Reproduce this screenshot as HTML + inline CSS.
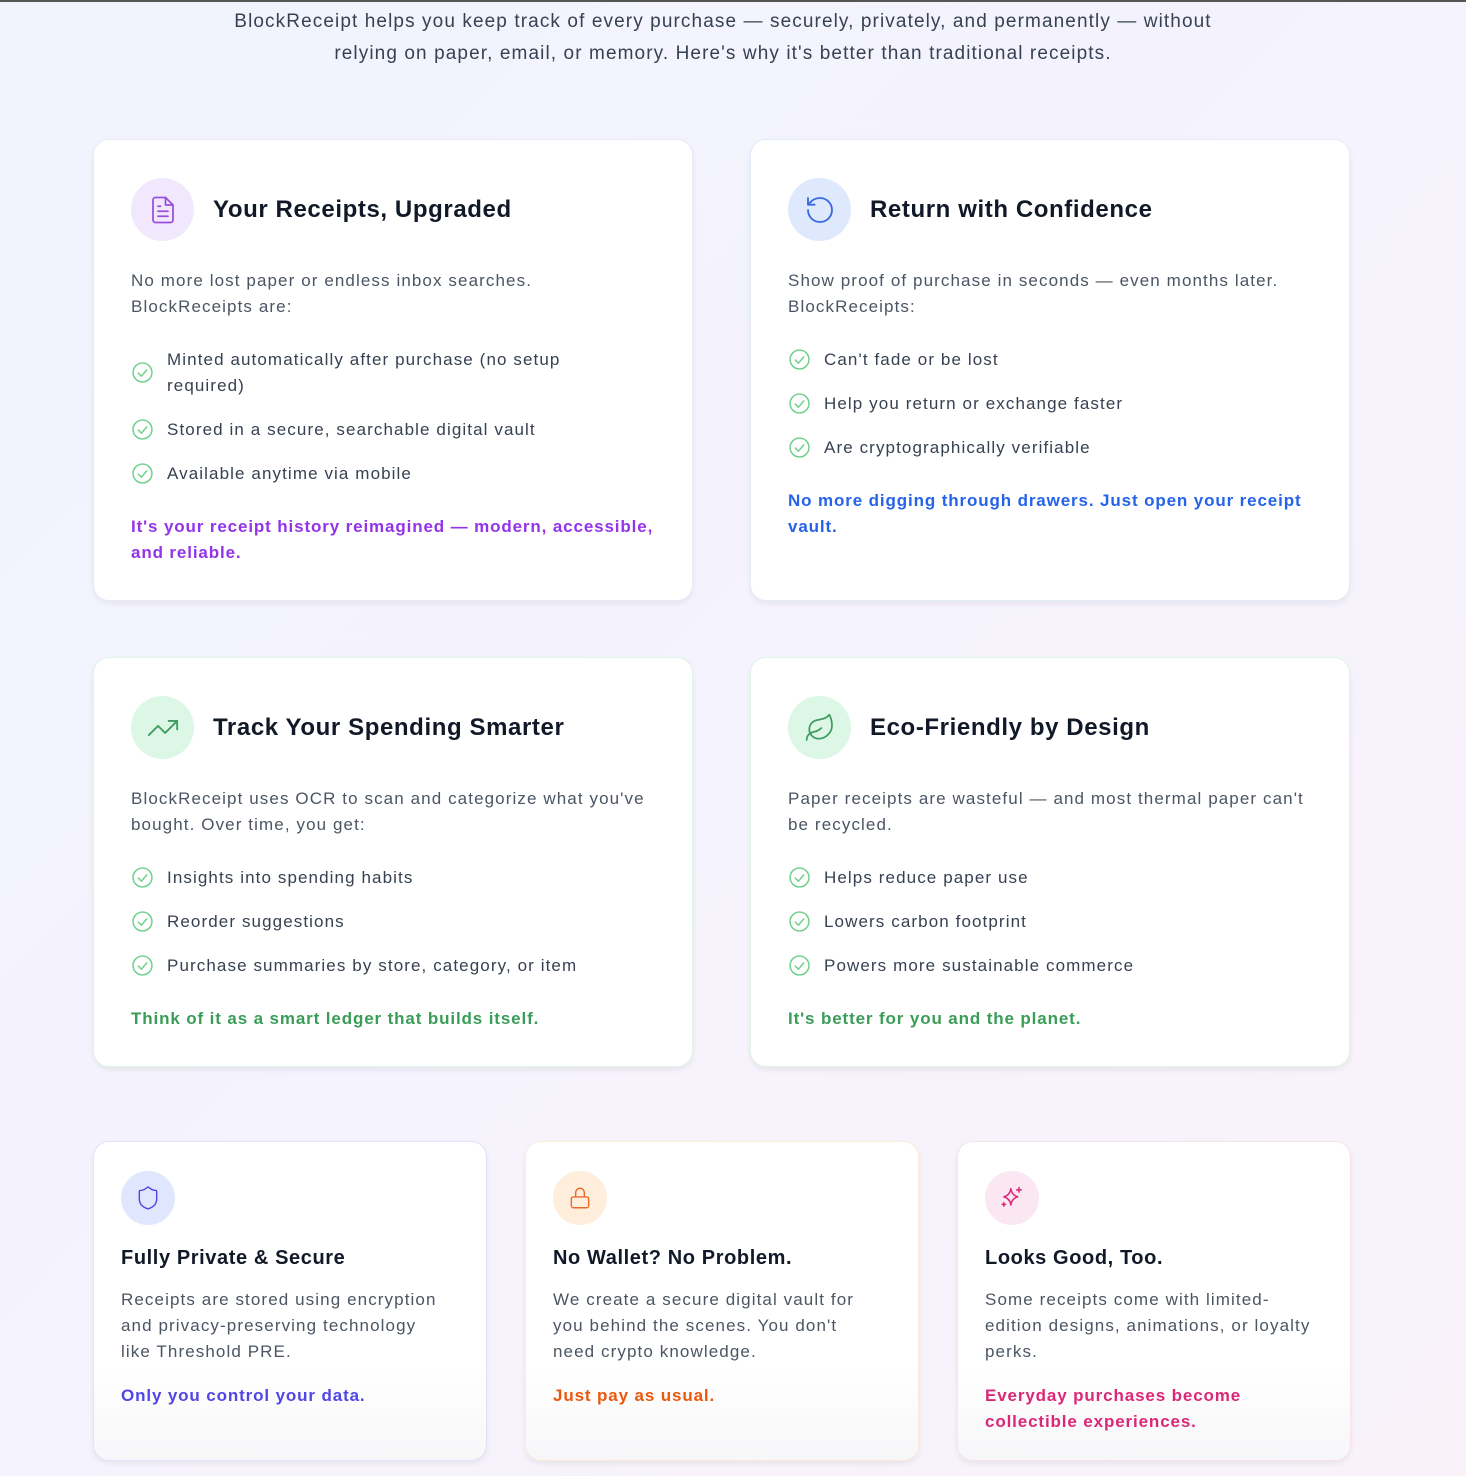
<!DOCTYPE html>
<html><head><meta charset="utf-8"><style>
*{box-sizing:border-box;margin:0;padding:0}
body{width:1466px;height:1476px;overflow:hidden;font-family:"Liberation Sans",sans-serif;background:linear-gradient(135deg,#f1f4fd 0%,#f5f3fd 50%,#f9f2f9 100%);border-top:2px solid #555;position:relative;color:#4b5563;letter-spacing:1.1px}
.intro{position:absolute;top:4px;left:-10px;width:1466px;text-align:center;font-size:19px;line-height:32px;color:#374151;letter-spacing:1.1px}
.card{position:absolute;background:#fff;border-radius:16px;box-shadow:0 3px 6px rgba(0,0,0,.06)}
.big{width:600px;padding:38px 36px 0 37px}
.ic{width:63px;height:63px;border-radius:50%;display:flex;align-items:center;justify-content:center;float:left}
.big h2{font-size:24px;color:#111827;font-weight:bold;margin-left:82px;line-height:63px;letter-spacing:0.6px}
.big .d{clear:both;padding-top:27px;font-size:17px;line-height:26px}
ul{list-style:none;margin-top:27px}
li{position:relative;padding-left:36px;font-size:17px;line-height:26px;margin-bottom:18px;color:#374151}
li svg{position:absolute;left:1px;top:2px}
.tag{font-size:17px;line-height:26px;font-weight:bold;margin-top:27px;letter-spacing:0.87px}
.sm{width:394px;height:320px;padding:26px 27px;background:linear-gradient(#fff 70%,#f7f7f9)}
.sm .ic{width:54px;height:54px;float:none;margin-top:3px}
.sm h3{font-size:20px;color:#111827;margin-top:20px;line-height:26px;letter-spacing:0.6px}
.sm .d{font-size:17px;line-height:26px;margin-top:16px}
.sm .tag{margin-top:18px;font-weight:bold}
</style></head><body>
<div class="intro">BlockReceipt helps you keep track of every purchase — securely, privately, and permanently — without<br>relying on paper, email, or memory. Here's why it's better than traditional receipts.</div>

<svg width="0" height="0" style="position:absolute"><defs><g id="ck"><circle cx="10" cy="10" r="9" fill="none" stroke="#6dd08a" stroke-width="1.4"/><path d="M6 10.5l3 3 5-6" fill="none" stroke="#6dd08a" stroke-width="1.4" stroke-linecap="round" stroke-linejoin="round"/></g></defs></svg>

<div class="card big" style="left:93px;top:137px;height:462px;border:1px solid #eee8fb">
<div class="ic" style="background:#f1e8fd"><svg width="30" height="30" viewBox="0 0 24 24" fill="none" stroke="#9b4ddc" stroke-width="1.4" stroke-linecap="round" stroke-linejoin="round"><path d="M14 2H6a2 2 0 0 0-2 2v16a2 2 0 0 0 2 2h12a2 2 0 0 0 2-2V8z"/><path d="M14 2v6h6M16 13H8M16 17H8M10 9H8"/></svg></div>
<h2>Your Receipts, Upgraded</h2>
<div class="d">No more lost paper or endless inbox searches.<br>BlockReceipts are:</div>
<ul><li><svg width="21" height="21" viewBox="0 0 20 20" style="top:15px"><use href="#ck"/></svg>Minted automatically after purchase (no setup<br>required)</li>
<li><svg width="21" height="21" viewBox="0 0 20 20"><use href="#ck"/></svg>Stored in a secure, searchable digital vault</li>
<li><svg width="21" height="21" viewBox="0 0 20 20"><use href="#ck"/></svg>Available anytime via mobile</li></ul>
<div class="tag" style="color:#9333ea">It's your receipt history reimagined — modern, accessible, and reliable.</div>
</div>

<div class="card big" style="left:750px;top:137px;height:462px;border:1px solid #e4ebfb">
<div class="ic" style="background:#dfe9fd"><svg width="32" height="32" viewBox="0 0 24 24" fill="none" stroke="#3b6ae0" stroke-width="1.4" stroke-linecap="round" stroke-linejoin="round"><path d="M3 12a9 9 0 1 0 9-9 9.75 9.75 0 0 0-6.74 2.74L3 8"/><path d="M3 3v5h5"/></svg></div>
<h2>Return with Confidence</h2>
<div class="d">Show proof of purchase in seconds — even months later.<br>BlockReceipts:</div>
<ul><li><svg width="21" height="21" viewBox="0 0 20 20"><use href="#ck"/></svg>Can't fade or be lost</li>
<li><svg width="21" height="21" viewBox="0 0 20 20"><use href="#ck"/></svg>Help you return or exchange faster</li>
<li><svg width="21" height="21" viewBox="0 0 20 20"><use href="#ck"/></svg>Are cryptographically verifiable</li></ul>
<div class="tag" style="color:#2563eb">No more digging through drawers. Just open your receipt vault.</div>
</div>

<div class="card big" style="left:93px;top:655px;height:410px;border:1px solid #dff5e6">
<div class="ic" style="background:#dcf7e6"><svg width="34" height="34" viewBox="0 0 24 24" fill="none" stroke="#3f9b5f" stroke-width="1.3" stroke-linecap="round" stroke-linejoin="round"><path d="M22 7l-8.5 8.5-5-5L2 17"/><path d="M16 7h6v6"/></svg></div>
<h2>Track Your Spending Smarter</h2>
<div class="d">BlockReceipt uses OCR to scan and categorize what you've bought. Over time, you get:</div>
<ul><li><svg width="21" height="21" viewBox="0 0 20 20"><use href="#ck"/></svg>Insights into spending habits</li>
<li><svg width="21" height="21" viewBox="0 0 20 20"><use href="#ck"/></svg>Reorder suggestions</li>
<li><svg width="21" height="21" viewBox="0 0 20 20"><use href="#ck"/></svg>Purchase summaries by store, category, or item</li></ul>
<div class="tag" style="color:#3a9d57">Think of it as a smart ledger that builds itself.</div>
</div>

<div class="card big" style="left:750px;top:655px;height:410px;border:1px solid #dff5e6">
<div class="ic" style="background:#dcf7e6"><svg width="32" height="32" viewBox="0 0 24 24" fill="none" stroke="#3f9b5f" stroke-width="1.3" stroke-linecap="round" stroke-linejoin="round"><path d="M11 20A7 7 0 0 1 9.8 6.1C15.5 5 17 4.48 19 2c1 2 2 4.18 2 8 0 5.5-4.78 10-10 10Z"/><path d="M2 21c0-3 1.85-5.36 5.08-6C9.5 14.52 12 13 13 12"/></svg></div>
<h2>Eco-Friendly by Design</h2>
<div class="d">Paper receipts are wasteful — and most thermal paper can't be recycled.</div>
<ul><li><svg width="21" height="21" viewBox="0 0 20 20"><use href="#ck"/></svg>Helps reduce paper use</li>
<li><svg width="21" height="21" viewBox="0 0 20 20"><use href="#ck"/></svg>Lowers carbon footprint</li>
<li><svg width="21" height="21" viewBox="0 0 20 20"><use href="#ck"/></svg>Powers more sustainable commerce</li></ul>
<div class="tag" style="color:#3a9d57">It's better for you and the planet.</div>
</div>

<div class="card sm" style="left:93px;top:1139px;border:1px solid #dfe3fb">
<div class="ic" style="background:#e0e6fd"><svg width="26" height="26" viewBox="0 0 24 24" fill="none" stroke="#4f46e5" stroke-width="1.3" stroke-linecap="round" stroke-linejoin="round"><path d="M20 13c0 5-3.5 7.5-7.66 8.95a1 1 0 0 1-.67-.01C7.5 20.5 4 18 4 13V6a1 1 0 0 1 1-1c2 0 4.5-1.2 6.24-2.72a1.17 1.17 0 0 1 1.52 0C14.51 3.810 17 5 19 5a1 1 0 0 1 1 1z"/></svg></div>
<h3>Fully Private &amp; Secure</h3>
<div class="d">Receipts are stored using encryption<br>and privacy-preserving technology<br>like Threshold PRE.</div>
<div class="tag" style="color:#4f46e5">Only you control your data.</div>
</div>

<div class="card sm" style="left:525px;top:1139px;border:1px solid #fbecd6">
<div class="ic" style="background:#feeedb"><svg width="26" height="26" viewBox="0 0 24 24" fill="none" stroke="#ea6a2a" stroke-width="1.3" stroke-linecap="round" stroke-linejoin="round"><rect x="4" y="11" width="16" height="10" rx="2"/><path d="M8 11V7a4 4 0 0 1 8 0v4"/></svg></div>
<h3>No Wallet? No Problem.</h3>
<div class="d">We create a secure digital vault for<br>you behind the scenes. You don't<br>need crypto knowledge.</div>
<div class="tag" style="color:#ea580c">Just pay as usual.</div>
</div>

<div class="card sm" style="left:957px;top:1139px;border:1px solid #f7e2ee">
<div class="ic" style="background:#fbe7f2"><svg width="28" height="28" viewBox="0 0 24 24" fill="none" stroke="#db2777" stroke-width="1.3" stroke-linecap="round" stroke-linejoin="round"><path d="M11 4c.5 4 2.5 6 6 7-3.5 1-5.5 3-6 7-.5-4-2.5-6-6-7 3.5-1 5.5-3 6-7z"/><path d="M18 3v4M16 5h4M5 16v3M3.5 17.5h3"/></svg></div>
<h3>Looks Good, Too.</h3>
<div class="d">Some receipts come with limited-<br>edition designs, animations, or loyalty<br>perks.</div>
<div class="tag" style="color:#db2777">Everyday purchases become<br>collectible experiences.</div>
</div>
</body></html>
